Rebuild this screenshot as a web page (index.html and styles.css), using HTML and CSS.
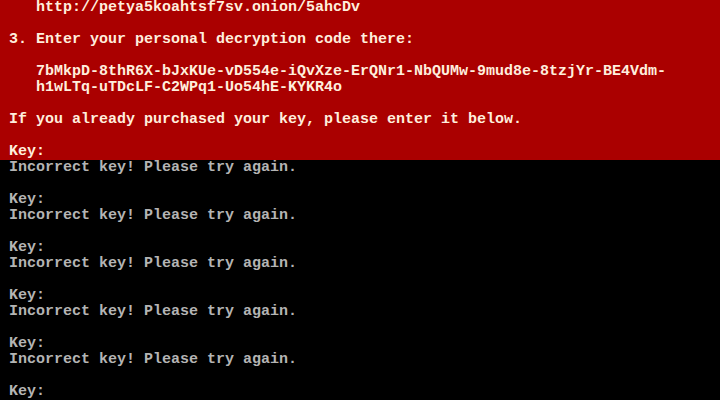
FILE: index.html
```html
<!DOCTYPE html>
<html lang="en">
<head>
    <meta charset="UTF-8">
    <title>Petya</title>
    <link rel="stylesheet" href="styles.css">
</head>
<body>

<div class="screen">
<div class="note">   http://petya5koahtsf7sv.onion/5ahcDv

3. Enter your personal decryption code there:

   7bMkpD-8thR6X-bJxKUe-vD554e-iQvXze-ErQNr1-NbQUMw-9mud8e-8tzjYr-BE4Vdm-
   h1wLTq-uTDcLF-C2WPq1-Uo54hE-KYKR4o

If you already purchased your key, please enter it below.

Key:</div>
<div class="console">Incorrect key! Please try again.

Key:
Incorrect key! Please try again.

Key:
Incorrect key! Please try again.

Key:
Incorrect key! Please try again.

Key:
Incorrect key! Please try again.

Key:</div>
</div>

</body>
</html>
```

FILE: styles.css
```css
body {
    margin: 0;
    background-color: #000;
}
.screen {
    width: 720px;
    height: 400px;
    overflow: hidden;
    font-family: "Liberation Mono", monospace;
    font-size: 15px;
    font-weight: bold;
    line-height: 16px;
}
.note {
    white-space: pre;
    background-color: #aa0000;
    color: #ffeedd;
    padding-left: 9px;
}
.console {
    white-space: pre;
    color: #b4b4b4;
    padding-left: 9px;
}
```
